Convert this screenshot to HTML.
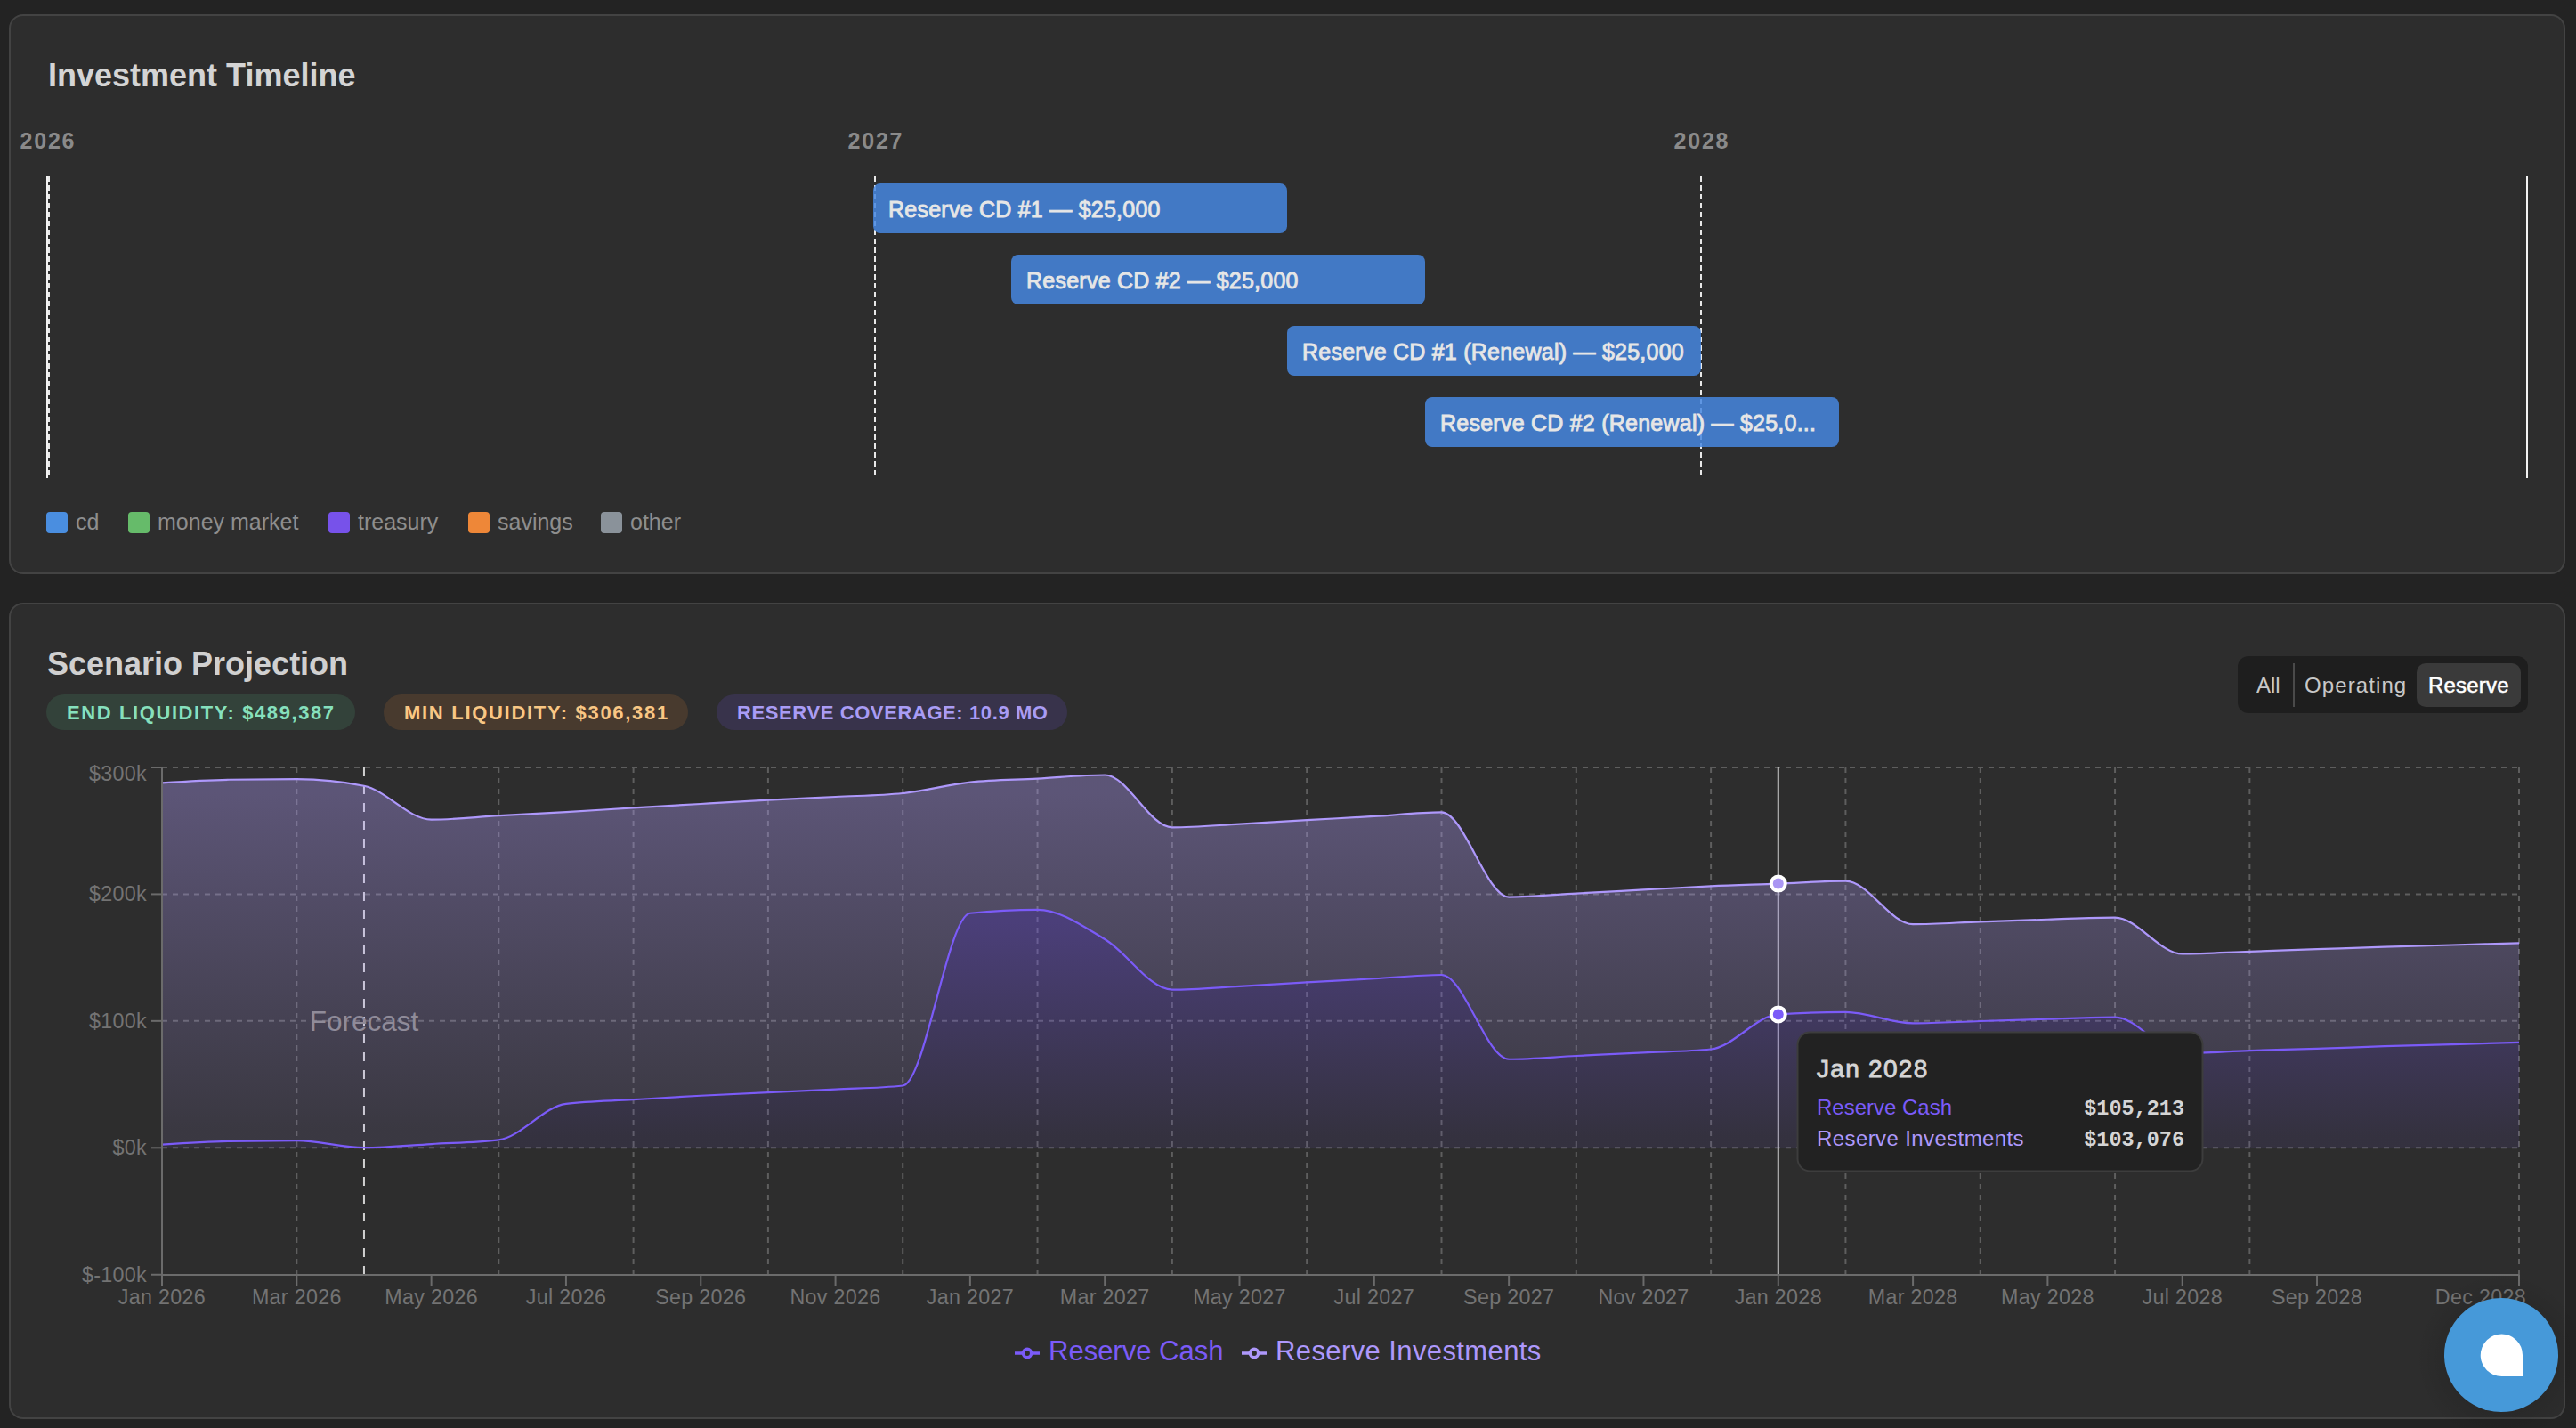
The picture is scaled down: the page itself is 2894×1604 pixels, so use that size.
<!DOCTYPE html>
<html><head><meta charset="utf-8"><title>Investment Timeline</title>
<style>
html,body{margin:0;padding:0;background:#232323;width:2894px;height:1604px;overflow:hidden;}
svg{display:block;font-family:"Liberation Sans", sans-serif;}
</style></head><body>
<svg width="2894" height="1604" viewBox="0 0 2894 1604">
<defs>
<linearGradient id="gInv" x1="0" y1="0" x2="0" y2="1"><stop offset="5%" stop-color="#b09cfa" stop-opacity="0.36"/><stop offset="95%" stop-color="#b09cfa" stop-opacity="0.10"/></linearGradient>
<linearGradient id="gCash" x1="0" y1="0" x2="0" y2="1"><stop offset="5%" stop-color="#7c5cf6" stop-opacity="0.38"/><stop offset="95%" stop-color="#7c5cf6" stop-opacity="0.09"/></linearGradient>
<radialGradient id="gShadow" cx="0.5" cy="0.5" r="0.5"><stop offset="0.6" stop-color="#000" stop-opacity="0.10"/><stop offset="1" stop-color="#000" stop-opacity="0"/></radialGradient>
</defs>
<rect x="11" y="17" width="2870" height="627" rx="15" fill="#2d2d2d" stroke="#434343" stroke-width="2"/>
<rect x="11" y="678" width="2870" height="915" rx="15" fill="#2d2d2d" stroke="#434343" stroke-width="2"/>
<text x="54" y="97" font-size="36" font-weight="700" fill="#d4d4d4">Investment Timeline</text>
<text x="53.9" y="167" font-size="25" font-weight="700" fill="#8a8a8a" text-anchor="middle" letter-spacing="1.8">2026</text>
<text x="983.9" y="167" font-size="25" font-weight="700" fill="#8a8a8a" text-anchor="middle" letter-spacing="1.8">2027</text>
<text x="1911.9" y="167" font-size="25" font-weight="700" fill="#8a8a8a" text-anchor="middle" letter-spacing="1.8">2028</text>
<rect x="52" y="198" width="2" height="339" fill="#f2f2f2"/>
<line x1="55" y1="198" x2="55" y2="537" stroke="#e8e8e8" stroke-width="2" stroke-dasharray="6 4"/>
<line x1="983" y1="198" x2="983" y2="537" stroke="#e8e8e8" stroke-width="2" stroke-dasharray="6 4"/>
<line x1="1911" y1="198" x2="1911" y2="537" stroke="#e8e8e8" stroke-width="2" stroke-dasharray="6 4"/>
<rect x="2838" y="198" width="2" height="339" fill="#f2f2f2"/>
<rect x="981" y="206" width="465" height="56" rx="8" fill="#4787e1" fill-opacity="0.85"/>
<text x="998" y="244" font-size="25" fill="#e6e6e6" stroke="#e6e6e6" stroke-width="0.9" letter-spacing="0.24">Reserve CD #1 — $25,000</text>
<rect x="1136" y="286" width="465" height="56" rx="8" fill="#4787e1" fill-opacity="0.85"/>
<text x="1153" y="324" font-size="25" fill="#e6e6e6" stroke="#e6e6e6" stroke-width="0.9" letter-spacing="0.24">Reserve CD #2 — $25,000</text>
<rect x="1446" y="366" width="465" height="56" rx="8" fill="#4787e1" fill-opacity="0.85"/>
<text x="1463" y="404" font-size="25" fill="#e6e6e6" stroke="#e6e6e6" stroke-width="0.9" letter-spacing="0.24">Reserve CD #1 (Renewal) — $25,000</text>
<rect x="1601" y="446" width="465" height="56" rx="8" fill="#4787e1" fill-opacity="0.85"/>
<text x="1618" y="484" font-size="25" fill="#e6e6e6" stroke="#e6e6e6" stroke-width="0.9" letter-spacing="0.24">Reserve CD #2 (Renewal) — $25,0...</text>
<rect x="52" y="575" width="24" height="24" rx="4" fill="#4a8ee0"/>
<text x="85" y="595" font-size="25" fill="#8e8e8e">cd</text>
<rect x="144" y="575" width="24" height="24" rx="4" fill="#66bb6a"/>
<text x="177" y="595" font-size="25" fill="#8e8e8e">money market</text>
<rect x="369" y="575" width="24" height="24" rx="4" fill="#7752ea"/>
<text x="402" y="595" font-size="25" fill="#8e8e8e">treasury</text>
<rect x="526" y="575" width="24" height="24" rx="4" fill="#ee8738"/>
<text x="559" y="595" font-size="25" fill="#8e8e8e">savings</text>
<rect x="675" y="575" width="24" height="24" rx="4" fill="#8a929a"/>
<text x="708" y="595" font-size="25" fill="#8e8e8e">other</text>
<text x="53" y="758" font-size="36" font-weight="700" fill="#d0d0d0">Scenario Projection</text>
<rect x="52" y="780" width="347" height="40" rx="20" fill="#33423a"/>
<text x="75" y="808" font-size="22" font-weight="700" fill="#86e0bd" letter-spacing="1.6">END LIQUIDITY: $489,387</text>
<rect x="431" y="780" width="342" height="40" rx="20" fill="#483a2e"/>
<text x="454" y="808" font-size="22" font-weight="700" fill="#f9c784" letter-spacing="1.7">MIN LIQUIDITY: $306,381</text>
<rect x="805" y="780" width="394" height="40" rx="20" fill="#38334b"/>
<text x="828" y="808" font-size="22" font-weight="700" fill="#a99cf5" letter-spacing="0.6">RESERVE COVERAGE: 10.9 MO</text>
<rect x="2514" y="737" width="326" height="64" rx="12" fill="#1e1e1e"/>
<rect x="2576" y="745" width="2" height="49" fill="#4a4a4a"/>
<rect x="2715" y="745" width="117" height="49" rx="10" fill="#3a3a3a"/>
<text x="2535" y="778" font-size="24" fill="#c8c8c8">All</text>
<text x="2589" y="778" font-size="24" fill="#c8c8c8" letter-spacing="1.1">Operating</text>
<text x="2728" y="778" font-size="24" fill="#ffffff" stroke="#ffffff" stroke-width="0.5" letter-spacing="0.2">Reserve</text>
<line x1="182.0" y1="862" x2="2830" y2="862" stroke="#5e5e5e" stroke-width="2" stroke-dasharray="6 6"/>
<line x1="182.0" y1="1004.4" x2="2830" y2="1004.4" stroke="#5e5e5e" stroke-width="2" stroke-dasharray="6 6"/>
<line x1="182.0" y1="1146.85" x2="2830" y2="1146.85" stroke="#5e5e5e" stroke-width="2" stroke-dasharray="6 6"/>
<line x1="182.0" y1="1289.3" x2="2830" y2="1289.3" stroke="#5e5e5e" stroke-width="2" stroke-dasharray="6 6"/>
<line x1="333.31" y1="862.0" x2="333.31" y2="1432.0" stroke="#5e5e5e" stroke-width="2" stroke-dasharray="6 6"/>
<line x1="560.29" y1="862.0" x2="560.29" y2="1432.0" stroke="#5e5e5e" stroke-width="2" stroke-dasharray="6 6"/>
<line x1="711.6" y1="862.0" x2="711.6" y2="1432.0" stroke="#5e5e5e" stroke-width="2" stroke-dasharray="6 6"/>
<line x1="862.91" y1="862.0" x2="862.91" y2="1432.0" stroke="#5e5e5e" stroke-width="2" stroke-dasharray="6 6"/>
<line x1="1014.23" y1="862.0" x2="1014.23" y2="1432.0" stroke="#5e5e5e" stroke-width="2" stroke-dasharray="6 6"/>
<line x1="1165.54" y1="862.0" x2="1165.54" y2="1432.0" stroke="#5e5e5e" stroke-width="2" stroke-dasharray="6 6"/>
<line x1="1316.86" y1="862.0" x2="1316.86" y2="1432.0" stroke="#5e5e5e" stroke-width="2" stroke-dasharray="6 6"/>
<line x1="1468.17" y1="862.0" x2="1468.17" y2="1432.0" stroke="#5e5e5e" stroke-width="2" stroke-dasharray="6 6"/>
<line x1="1619.49" y1="862.0" x2="1619.49" y2="1432.0" stroke="#5e5e5e" stroke-width="2" stroke-dasharray="6 6"/>
<line x1="1770.8" y1="862.0" x2="1770.8" y2="1432.0" stroke="#5e5e5e" stroke-width="2" stroke-dasharray="6 6"/>
<line x1="1922.11" y1="862.0" x2="1922.11" y2="1432.0" stroke="#5e5e5e" stroke-width="2" stroke-dasharray="6 6"/>
<line x1="2073.43" y1="862.0" x2="2073.43" y2="1432.0" stroke="#5e5e5e" stroke-width="2" stroke-dasharray="6 6"/>
<line x1="2224.74" y1="862.0" x2="2224.74" y2="1432.0" stroke="#5e5e5e" stroke-width="2" stroke-dasharray="6 6"/>
<line x1="2376.06" y1="862.0" x2="2376.06" y2="1432.0" stroke="#5e5e5e" stroke-width="2" stroke-dasharray="6 6"/>
<line x1="2527.37" y1="862.0" x2="2527.37" y2="1432.0" stroke="#5e5e5e" stroke-width="2" stroke-dasharray="6 6"/>
<line x1="2830" y1="862.0" x2="2830" y2="1432.0" stroke="#5e5e5e" stroke-width="2" stroke-dasharray="6 6"/>
<line x1="408.97" y1="862.0" x2="408.97" y2="1432.0" stroke="#d0d0d0" stroke-width="2" stroke-dasharray="10 10"/>
<line x1="1997.77" y1="862.0" x2="1997.77" y2="1432.0" stroke="#cccccc" stroke-width="2"/>
<path d="M182,879.33C207.22,877.74,232.44,876.15,257.66,875.77C282.88,875.39,308.1,875.2,333.31,875.2C358.53,875.2,383.75,877.71,408.97,882.75C434.19,887.78,459.41,920.64,484.63,920.64C509.85,920.64,535.07,917.65,560.29,916.22C585.5,914.8,610.72,913.56,635.94,912.09C661.16,910.62,686.38,908.91,711.6,907.39C736.82,905.87,762.04,904.42,787.26,902.98C812.48,901.53,837.7,900.03,862.91,898.7C888.13,897.37,913.35,896.28,938.57,895C963.79,893.72,989.01,893.67,1014.23,891.01C1039.45,888.35,1064.67,881.28,1089.89,878.62C1115.1,875.96,1140.32,875.98,1165.54,874.63C1190.76,873.27,1215.98,870.5,1241.2,870.5C1266.42,870.5,1291.64,929.33,1316.86,929.33C1342.08,929.33,1367.3,926.98,1392.51,925.63C1417.73,924.27,1442.95,922.66,1468.17,921.21C1493.39,919.76,1518.61,918.41,1543.83,916.94C1569.05,915.46,1594.27,912.38,1619.49,912.38C1644.7,912.38,1669.92,1007.53,1695.14,1007.53C1720.36,1007.53,1745.58,1004.9,1770.8,1003.55C1796.02,1002.19,1821.24,1000.79,1846.46,999.41C1871.68,998.04,1896.9,996.42,1922.11,995.28C1947.33,994.14,1972.55,993.53,1997.77,992.58C2022.99,991.63,2048.21,989.59,2073.43,989.59C2098.65,989.59,2123.87,1038.16,2149.09,1038.16C2174.3,1038.16,2199.52,1036.21,2224.74,1035.31C2249.96,1034.41,2275.18,1033.53,2300.4,1032.75C2325.62,1031.96,2350.84,1030.61,2376.06,1030.61C2401.28,1030.61,2426.5,1071.49,2451.71,1071.49C2476.93,1071.49,2502.15,1069.67,2527.37,1068.79C2552.59,1067.91,2577.81,1067.08,2603.03,1066.22C2628.25,1065.37,2653.47,1064.44,2678.69,1063.66C2703.9,1062.88,2729.12,1062.23,2754.34,1061.52C2779.56,1060.81,2804.78,1060.1,2830,1059.39L2830,1170.92C2804.78,1171.64,2779.56,1172.35,2754.34,1173.06C2729.12,1173.77,2703.9,1174.39,2678.69,1175.2C2653.47,1176,2628.25,1177.1,2603.03,1177.9C2577.81,1178.71,2552.59,1179.21,2527.37,1180.04C2502.15,1180.87,2476.93,1182.89,2451.71,1182.89C2426.5,1182.89,2401.28,1142.58,2376.06,1142.58C2350.84,1142.58,2325.62,1143.98,2300.4,1144.71C2275.18,1145.45,2249.96,1146.21,2224.74,1146.99C2199.52,1147.78,2174.3,1149.41,2149.09,1149.41C2123.87,1149.41,2098.65,1136.88,2073.43,1136.88C2048.21,1136.88,2022.99,1137.73,1997.77,1139.44C1972.55,1141.15,1947.33,1175.91,1922.11,1178.47C1896.9,1181.04,1871.68,1181.06,1846.46,1182.32C1821.24,1183.58,1796.02,1184.79,1770.8,1186.02C1745.58,1187.26,1720.36,1189.73,1695.14,1189.73C1669.92,1189.73,1644.7,1095,1619.49,1095C1594.27,1095,1569.05,1097.87,1543.83,1099.27C1518.61,1100.67,1493.39,1101.98,1468.17,1103.4C1442.95,1104.83,1417.73,1106.44,1392.51,1107.82C1367.3,1109.2,1342.08,1111.66,1316.86,1111.66C1291.64,1111.66,1266.42,1069.95,1241.2,1054.97C1215.98,1039.99,1190.76,1021.78,1165.54,1021.78C1140.32,1021.78,1115.1,1023.11,1089.89,1025.77C1064.67,1028.43,1039.45,1216.75,1014.23,1219.5C989.01,1222.25,963.79,1222.37,938.57,1223.63C913.35,1224.89,888.13,1225.86,862.91,1227.05C837.7,1228.24,812.48,1229.4,787.26,1230.75C762.04,1232.11,736.82,1233.65,711.6,1235.17C686.38,1236.69,661.16,1236.74,635.94,1239.87C610.72,1243,585.5,1277.19,560.29,1280.33C535.07,1283.46,509.85,1283.55,484.63,1285.03C459.41,1286.5,434.19,1289.16,408.97,1289.16C383.75,1289.16,358.53,1281.18,333.31,1281.18C308.1,1281.18,282.88,1281.42,257.66,1281.89C232.44,1282.37,207.22,1283.98,182,1285.6Z" fill="url(#gInv)"/>
<path d="M182,1285.6C207.22,1283.98,232.44,1282.37,257.66,1281.89C282.88,1281.42,308.1,1281.18,333.31,1281.18C358.53,1281.18,383.75,1289.16,408.97,1289.16C434.19,1289.16,459.41,1286.5,484.63,1285.03C509.85,1283.55,535.07,1283.46,560.29,1280.33C585.5,1277.19,610.72,1243,635.94,1239.87C661.16,1236.74,686.38,1236.69,711.6,1235.17C736.82,1233.65,762.04,1232.11,787.26,1230.75C812.48,1229.4,837.7,1228.24,862.91,1227.05C888.13,1225.86,913.35,1224.89,938.57,1223.63C963.79,1222.37,989.01,1222.25,1014.23,1219.5C1039.45,1216.75,1064.67,1028.43,1089.89,1025.77C1115.1,1023.11,1140.32,1021.78,1165.54,1021.78C1190.76,1021.78,1215.98,1039.99,1241.2,1054.97C1266.42,1069.95,1291.64,1111.66,1316.86,1111.66C1342.08,1111.66,1367.3,1109.2,1392.51,1107.82C1417.73,1106.44,1442.95,1104.83,1468.17,1103.4C1493.39,1101.98,1518.61,1100.67,1543.83,1099.27C1569.05,1097.87,1594.27,1095,1619.49,1095C1644.7,1095,1669.92,1189.73,1695.14,1189.73C1720.36,1189.73,1745.58,1187.26,1770.8,1186.02C1796.02,1184.79,1821.24,1183.58,1846.46,1182.32C1871.68,1181.06,1896.9,1181.04,1922.11,1178.47C1947.33,1175.91,1972.55,1141.15,1997.77,1139.44C2022.99,1137.73,2048.21,1136.88,2073.43,1136.88C2098.65,1136.88,2123.87,1149.41,2149.09,1149.41C2174.3,1149.41,2199.52,1147.78,2224.74,1146.99C2249.96,1146.21,2275.18,1145.45,2300.4,1144.71C2325.62,1143.98,2350.84,1142.58,2376.06,1142.58C2401.28,1142.58,2426.5,1182.89,2451.71,1182.89C2476.93,1182.89,2502.15,1180.87,2527.37,1180.04C2552.59,1179.21,2577.81,1178.71,2603.03,1177.9C2628.25,1177.1,2653.47,1176,2678.69,1175.2C2703.9,1174.39,2729.12,1173.77,2754.34,1173.06C2779.56,1172.35,2804.78,1171.64,2830,1170.92L2830,1289.3L182,1289.3Z" fill="url(#gCash)"/>
<path d="M182,879.33C207.22,877.74,232.44,876.15,257.66,875.77C282.88,875.39,308.1,875.2,333.31,875.2C358.53,875.2,383.75,877.71,408.97,882.75C434.19,887.78,459.41,920.64,484.63,920.64C509.85,920.64,535.07,917.65,560.29,916.22C585.5,914.8,610.72,913.56,635.94,912.09C661.16,910.62,686.38,908.91,711.6,907.39C736.82,905.87,762.04,904.42,787.26,902.98C812.48,901.53,837.7,900.03,862.91,898.7C888.13,897.37,913.35,896.28,938.57,895C963.79,893.72,989.01,893.67,1014.23,891.01C1039.45,888.35,1064.67,881.28,1089.89,878.62C1115.1,875.96,1140.32,875.98,1165.54,874.63C1190.76,873.27,1215.98,870.5,1241.2,870.5C1266.42,870.5,1291.64,929.33,1316.86,929.33C1342.08,929.33,1367.3,926.98,1392.51,925.63C1417.73,924.27,1442.95,922.66,1468.17,921.21C1493.39,919.76,1518.61,918.41,1543.83,916.94C1569.05,915.46,1594.27,912.38,1619.49,912.38C1644.7,912.38,1669.92,1007.53,1695.14,1007.53C1720.36,1007.53,1745.58,1004.9,1770.8,1003.55C1796.02,1002.19,1821.24,1000.79,1846.46,999.41C1871.68,998.04,1896.9,996.42,1922.11,995.28C1947.33,994.14,1972.55,993.53,1997.77,992.58C2022.99,991.63,2048.21,989.59,2073.43,989.59C2098.65,989.59,2123.87,1038.16,2149.09,1038.16C2174.3,1038.16,2199.52,1036.21,2224.74,1035.31C2249.96,1034.41,2275.18,1033.53,2300.4,1032.75C2325.62,1031.96,2350.84,1030.61,2376.06,1030.61C2401.28,1030.61,2426.5,1071.49,2451.71,1071.49C2476.93,1071.49,2502.15,1069.67,2527.37,1068.79C2552.59,1067.91,2577.81,1067.08,2603.03,1066.22C2628.25,1065.37,2653.47,1064.44,2678.69,1063.66C2703.9,1062.88,2729.12,1062.23,2754.34,1061.52C2779.56,1060.81,2804.78,1060.1,2830,1059.39" fill="none" stroke="#ae98fb" stroke-width="2.2"/>
<path d="M182,1285.6C207.22,1283.98,232.44,1282.37,257.66,1281.89C282.88,1281.42,308.1,1281.18,333.31,1281.18C358.53,1281.18,383.75,1289.16,408.97,1289.16C434.19,1289.16,459.41,1286.5,484.63,1285.03C509.85,1283.55,535.07,1283.46,560.29,1280.33C585.5,1277.19,610.72,1243,635.94,1239.87C661.16,1236.74,686.38,1236.69,711.6,1235.17C736.82,1233.65,762.04,1232.11,787.26,1230.75C812.48,1229.4,837.7,1228.24,862.91,1227.05C888.13,1225.86,913.35,1224.89,938.57,1223.63C963.79,1222.37,989.01,1222.25,1014.23,1219.5C1039.45,1216.75,1064.67,1028.43,1089.89,1025.77C1115.1,1023.11,1140.32,1021.78,1165.54,1021.78C1190.76,1021.78,1215.98,1039.99,1241.2,1054.97C1266.42,1069.95,1291.64,1111.66,1316.86,1111.66C1342.08,1111.66,1367.3,1109.2,1392.51,1107.82C1417.73,1106.44,1442.95,1104.83,1468.17,1103.4C1493.39,1101.98,1518.61,1100.67,1543.83,1099.27C1569.05,1097.87,1594.27,1095,1619.49,1095C1644.7,1095,1669.92,1189.73,1695.14,1189.73C1720.36,1189.73,1745.58,1187.26,1770.8,1186.02C1796.02,1184.79,1821.24,1183.58,1846.46,1182.32C1871.68,1181.06,1896.9,1181.04,1922.11,1178.47C1947.33,1175.91,1972.55,1141.15,1997.77,1139.44C2022.99,1137.73,2048.21,1136.88,2073.43,1136.88C2098.65,1136.88,2123.87,1149.41,2149.09,1149.41C2174.3,1149.41,2199.52,1147.78,2224.74,1146.99C2249.96,1146.21,2275.18,1145.45,2300.4,1144.71C2325.62,1143.98,2350.84,1142.58,2376.06,1142.58C2401.28,1142.58,2426.5,1182.89,2451.71,1182.89C2476.93,1182.89,2502.15,1180.87,2527.37,1180.04C2552.59,1179.21,2577.81,1178.71,2603.03,1177.9C2628.25,1177.1,2653.47,1176,2678.69,1175.2C2703.9,1174.39,2729.12,1173.77,2754.34,1173.06C2779.56,1172.35,2804.78,1171.64,2830,1170.92" fill="none" stroke="#7b5bf8" stroke-width="2.2"/>
<text x="408.97" y="1158" font-size="31.5" fill="#8f8b99" text-anchor="middle">Forecast</text>
<line x1="182.0" y1="862.0" x2="182.0" y2="1432.0" stroke="#6b6b6b" stroke-width="2"/>
<line x1="182.0" y1="1432.0" x2="2830" y2="1432.0" stroke="#6b6b6b" stroke-width="2"/>
<line x1="170" y1="862" x2="182.0" y2="862" stroke="#6b6b6b" stroke-width="2"/>
<text x="165" y="877" font-size="23.3" fill="#737373" letter-spacing="0.3" text-anchor="end">$300k</text>
<line x1="170" y1="1004.4" x2="182.0" y2="1004.4" stroke="#6b6b6b" stroke-width="2"/>
<text x="165" y="1012.4" font-size="23.3" fill="#737373" letter-spacing="0.3" text-anchor="end">$200k</text>
<line x1="170" y1="1146.85" x2="182.0" y2="1146.85" stroke="#6b6b6b" stroke-width="2"/>
<text x="165" y="1154.85" font-size="23.3" fill="#737373" letter-spacing="0.3" text-anchor="end">$100k</text>
<line x1="170" y1="1289.3" x2="182.0" y2="1289.3" stroke="#6b6b6b" stroke-width="2"/>
<text x="165" y="1297.3" font-size="23.3" fill="#737373" letter-spacing="0.3" text-anchor="end">$0k</text>
<line x1="170" y1="1431.75" x2="182.0" y2="1431.75" stroke="#6b6b6b" stroke-width="2"/>
<text x="165" y="1439.75" font-size="23.3" fill="#737373" letter-spacing="0.3" text-anchor="end">$-100k</text>
<line x1="182" y1="1432.0" x2="182" y2="1444" stroke="#6b6b6b" stroke-width="2"/>
<text x="182" y="1465" font-size="23.3" fill="#737373" letter-spacing="0.3" text-anchor="middle">Jan 2026</text>
<line x1="333.31" y1="1432.0" x2="333.31" y2="1444" stroke="#6b6b6b" stroke-width="2"/>
<text x="333.31" y="1465" font-size="23.3" fill="#737373" letter-spacing="0.3" text-anchor="middle">Mar 2026</text>
<line x1="484.63" y1="1432.0" x2="484.63" y2="1444" stroke="#6b6b6b" stroke-width="2"/>
<text x="484.63" y="1465" font-size="23.3" fill="#737373" letter-spacing="0.3" text-anchor="middle">May 2026</text>
<line x1="635.94" y1="1432.0" x2="635.94" y2="1444" stroke="#6b6b6b" stroke-width="2"/>
<text x="635.94" y="1465" font-size="23.3" fill="#737373" letter-spacing="0.3" text-anchor="middle">Jul 2026</text>
<line x1="787.26" y1="1432.0" x2="787.26" y2="1444" stroke="#6b6b6b" stroke-width="2"/>
<text x="787.26" y="1465" font-size="23.3" fill="#737373" letter-spacing="0.3" text-anchor="middle">Sep 2026</text>
<line x1="938.57" y1="1432.0" x2="938.57" y2="1444" stroke="#6b6b6b" stroke-width="2"/>
<text x="938.57" y="1465" font-size="23.3" fill="#737373" letter-spacing="0.3" text-anchor="middle">Nov 2026</text>
<line x1="1089.89" y1="1432.0" x2="1089.89" y2="1444" stroke="#6b6b6b" stroke-width="2"/>
<text x="1089.89" y="1465" font-size="23.3" fill="#737373" letter-spacing="0.3" text-anchor="middle">Jan 2027</text>
<line x1="1241.2" y1="1432.0" x2="1241.2" y2="1444" stroke="#6b6b6b" stroke-width="2"/>
<text x="1241.2" y="1465" font-size="23.3" fill="#737373" letter-spacing="0.3" text-anchor="middle">Mar 2027</text>
<line x1="1392.51" y1="1432.0" x2="1392.51" y2="1444" stroke="#6b6b6b" stroke-width="2"/>
<text x="1392.51" y="1465" font-size="23.3" fill="#737373" letter-spacing="0.3" text-anchor="middle">May 2027</text>
<line x1="1543.83" y1="1432.0" x2="1543.83" y2="1444" stroke="#6b6b6b" stroke-width="2"/>
<text x="1543.83" y="1465" font-size="23.3" fill="#737373" letter-spacing="0.3" text-anchor="middle">Jul 2027</text>
<line x1="1695.14" y1="1432.0" x2="1695.14" y2="1444" stroke="#6b6b6b" stroke-width="2"/>
<text x="1695.14" y="1465" font-size="23.3" fill="#737373" letter-spacing="0.3" text-anchor="middle">Sep 2027</text>
<line x1="1846.46" y1="1432.0" x2="1846.46" y2="1444" stroke="#6b6b6b" stroke-width="2"/>
<text x="1846.46" y="1465" font-size="23.3" fill="#737373" letter-spacing="0.3" text-anchor="middle">Nov 2027</text>
<line x1="1997.77" y1="1432.0" x2="1997.77" y2="1444" stroke="#6b6b6b" stroke-width="2"/>
<text x="1997.77" y="1465" font-size="23.3" fill="#737373" letter-spacing="0.3" text-anchor="middle">Jan 2028</text>
<line x1="2149.09" y1="1432.0" x2="2149.09" y2="1444" stroke="#6b6b6b" stroke-width="2"/>
<text x="2149.09" y="1465" font-size="23.3" fill="#737373" letter-spacing="0.3" text-anchor="middle">Mar 2028</text>
<line x1="2300.4" y1="1432.0" x2="2300.4" y2="1444" stroke="#6b6b6b" stroke-width="2"/>
<text x="2300.4" y="1465" font-size="23.3" fill="#737373" letter-spacing="0.3" text-anchor="middle">May 2028</text>
<line x1="2451.71" y1="1432.0" x2="2451.71" y2="1444" stroke="#6b6b6b" stroke-width="2"/>
<text x="2451.71" y="1465" font-size="23.3" fill="#737373" letter-spacing="0.3" text-anchor="middle">Jul 2028</text>
<line x1="2603.03" y1="1432.0" x2="2603.03" y2="1444" stroke="#6b6b6b" stroke-width="2"/>
<text x="2603.03" y="1465" font-size="23.3" fill="#737373" letter-spacing="0.3" text-anchor="middle">Sep 2028</text>
<line x1="2830" y1="1432.0" x2="2830" y2="1444" stroke="#6b6b6b" stroke-width="2"/>
<text x="2838" y="1465" font-size="23.3" fill="#737373" letter-spacing="0.3" text-anchor="end">Dec 2028</text>
<circle cx="1997.77" cy="992.58" r="8" fill="#aa96f3" stroke="#ffffff" stroke-width="4"/>
<circle cx="1997.77" cy="1139.44" r="8" fill="#7b5bf8" stroke="#ffffff" stroke-width="4"/>
<g transform="translate(1140,1506) scale(0.875)"><path stroke="#7b5bf8" stroke-width="4" fill="none" d="M0,16h10.666666666666666A5.333333333333333,5.333333333333333,0,1,1,21.333333333333332,16H32M21.333333333333332,16A5.333333333333333,5.333333333333333,0,1,1,10.666666666666666,16"/></g>
<text x="1178" y="1528" font-size="31" fill="#7b5bf8">Reserve Cash</text>
<g transform="translate(1395,1506) scale(0.875)"><path stroke="#ae98fb" stroke-width="4" fill="none" d="M0,16h10.666666666666666A5.333333333333333,5.333333333333333,0,1,1,21.333333333333332,16H32M21.333333333333332,16A5.333333333333333,5.333333333333333,0,1,1,10.666666666666666,16"/></g>
<text x="1433" y="1528" font-size="31" fill="#ae98fb" letter-spacing="0.4">Reserve Investments</text>
<rect x="2019.5" y="1159.5" width="455" height="156" rx="14" fill="#222222" stroke="#3d3d3d" stroke-width="2"/>
<text x="2041" y="1210" font-size="28" fill="#d5d5d5" stroke="#d5d5d5" stroke-width="0.9" letter-spacing="1.3">Jan 2028</text>
<text x="2041" y="1252" font-size="24" fill="#7b5bf8">Reserve Cash</text>
<text x="2041" y="1287" font-size="24" fill="#ae98fb" letter-spacing="0.4">Reserve Investments</text>
<text x="2454" y="1252" font-size="23.5" font-weight="700" fill="#d5d5d5" text-anchor="end" font-family="'Liberation Mono', monospace">$105,213</text>
<text x="2454" y="1287" font-size="23.5" font-weight="700" fill="#d5d5d5" text-anchor="end" font-family="'Liberation Mono', monospace">$103,076</text>
<circle cx="2810" cy="1526" r="96" fill="url(#gShadow)"/>
<circle cx="2810" cy="1522" r="64" fill="#4699d9"/>
<path d="M2810.5,1498.5 A23.5,23.5 0 0 1 2834,1522 L2834,1546 L2810.5,1546 A23.5,23.5 0 0 1 2810.5,1498.5 Z" fill="#ffffff"/>
</svg>
</body></html>
